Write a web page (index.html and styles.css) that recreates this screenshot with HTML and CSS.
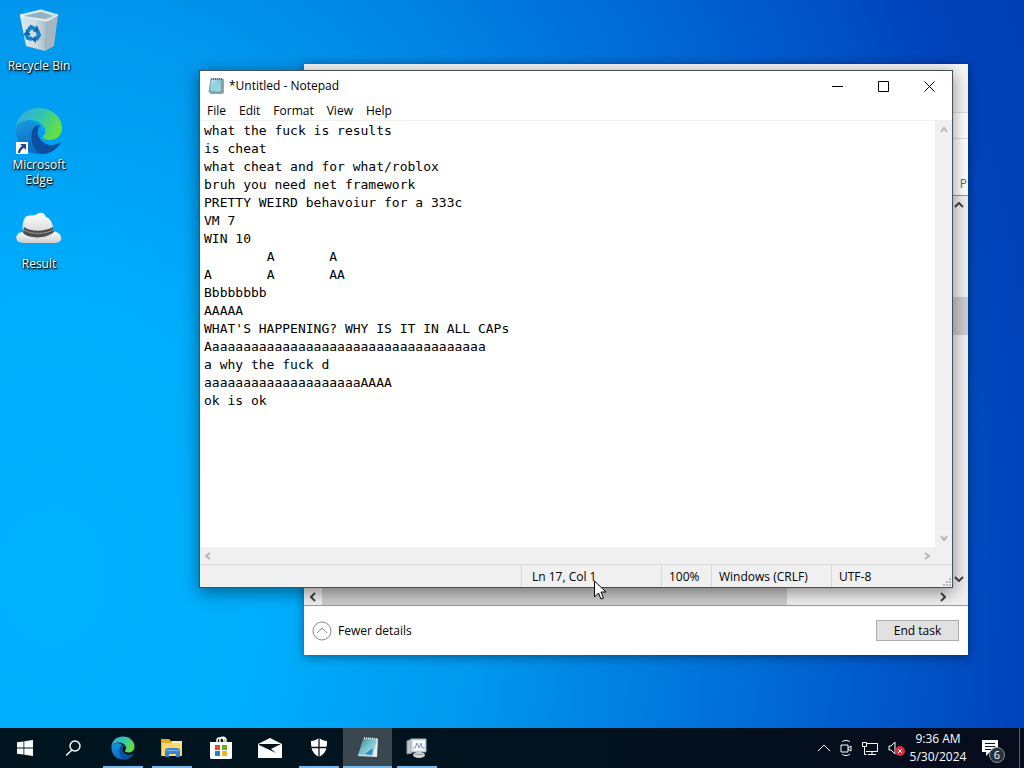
FILE: index.html
```html
<!DOCTYPE html>
<html lang="en">
<head>
    <meta charset="UTF-8">
    <meta name="viewport" content="width=device-width, initial-scale=1.0">
    <title>Desktop</title>
    <link rel="stylesheet" href="styles.css">
</head>
<body>
    <!-- shared shapes -->
    <svg class="defs" width="0" height="0" aria-hidden="true">
        <defs>
            <linearGradient id="edgeTop" x1="0" y1="0" x2="1" y2="0.4">
                <stop offset="0" stop-color="#35a7e4"/>
                <stop offset="0.55" stop-color="#31c4b4"/>
                <stop offset="1" stop-color="#62df45"/>
            </linearGradient>
            <linearGradient id="edgeLeft" x1="0" y1="0" x2="0.5" y2="1">
                <stop offset="0" stop-color="#1b98df"/>
                <stop offset="1" stop-color="#0865bd"/>
            </linearGradient>
            <linearGradient id="paper" x1="0" y1="0" x2="1" y2="1">
                <stop offset="0" stop-color="#dff5f9"/>
                <stop offset="0.5" stop-color="#7cc6d6"/>
                <stop offset="1" stop-color="#b9e2ec"/>
            </linearGradient>
            <linearGradient id="page" x1="0" y1="0" x2="1" y2="1">
                <stop offset="0" stop-color="#2f8190"/>
                <stop offset="0.5" stop-color="#7cc3cf"/>
                <stop offset="1" stop-color="#c4e8f0"/>
            </linearGradient>
            <linearGradient id="binSide" x1="0" y1="0" x2="1" y2="0">
                <stop offset="0" stop-color="#dce7ee"/>
                <stop offset="0.6" stop-color="#cfdae1"/>
                <stop offset="1" stop-color="#a9bac5"/>
            </linearGradient>
            <linearGradient id="felt" x1="0" y1="0" x2="0" y2="1">
                <stop offset="0" stop-color="#ffffff"/>
                <stop offset="1" stop-color="#cfcfcf"/>
            </linearGradient>
            <symbol id="edge" viewBox="0 0 48 48">
                <path fill="url(#edgeLeft)" d="M1 20C0 35 8 47 25 47c9 0 16-4 20-11-7 4-16 3-20-3-4-5-3-10 0-13C18 12 6 12 1 20z"/>
                <path fill="#0d4f9e" d="M17 25c1-5 4-7 8-7-3 4-3 9 0 14 4 6 12 8 19 4 2-1 2 0 1 1-5 7-12 10-18 10-8-3-12-11-10-22z"/>
                <path fill="url(#edgeTop)" d="M1 21C2 9 11 1 24 1c14 0 23 10 23 20 0 7-5 12-12 12-5 0-8-2-7-4 2-2 3-4 2-7-2-5-8-9-15-9-7 0-12 3-14 8z"/>
            </symbol>
        </defs>
    </svg>

    <div class="screen">
        <main class="desktop">
            <nav class="shortcuts" aria-label="Desktop icons">
                <button class="shortcut">
                    <svg width="48" height="48" viewBox="0 0 48 48">
                        <path fill="#c5dfeb" stroke="#edf6fa" d="M5 7l21-5 17 5-10 6z"/>
                        <path fill="#94afbd" d="M9 8l17-4 12 4-8 3z"/>
                        <path fill="url(#binSide)" d="M5 8l27 5-2 30-19-5z"/>
                        <path fill="#a6b7c1" d="M32 13l11-6-4 31-9 5z"/>
                        <path fill="none" stroke="#edf5f8" d="M5 8l27 5 11-6"/>
                        <path fill="none" stroke="#1482ce" stroke-width="4" d="M12 24l4-5 4 2M22 22l2 5-3 5M17 31l-4-1-2-4"/>
                        <path fill="#1267a8" d="M18 24l6-1-2-6zM21 28l-5 3 5 4zM8 27l4-5 4 5z"/>
                    </svg>
                    <span>Recycle Bin</span>
                </button>
                <button class="shortcut">
                    <svg width="48" height="48" viewBox="0 0 48 48">
                        <use href="#edge" width="48" height="48"/>
                        <path fill="#fff" d="M1 35h12v12H1z"/>
                        <path fill="#26478a" d="M5 37h6v6l-2-2c-2 1-3 2-4 5H3c0-3 1-5 4-7z"/>
                    </svg>
                    <span>Microsoft Edge</span>
                </button>
                <button class="shortcut">
                    <svg width="48" height="48" viewBox="0 0 48 48">
                        <path fill="url(#felt)" d="M9 26c-7 0-9 5-7 8 1 3 5 3 10 3h26c6 0 9-2 8-6-1-4-4-5-9-6z"/>
                        <path fill="url(#felt)" d="M8 25c-1-5 0-13 4-15 4-1 7 0 10-2 5-3 8 0 9 3 4 1 7 6 8 15-4 7-25 8-31-1z"/>
                        <path fill="#4d4d4d" d="M9 21c7 5 20 5 29 0l1 5c-8 7-25 7-31 1z"/>
                        <path fill="none" stroke="#999" d="M9 24c8 5 22 4 29 0"/>
                    </svg>
                    <span>Result</span>
                </button>
            </nav>

            <section class="window taskmgr" aria-label="Task Manager">
                <div class="tm-title"></div>
                <div class="tm-tabs"></div>
                <div class="tm-header">P</div>
                <div class="tm-body">
                    <div class="tm-vscroll">
                        <svg width="10" height="6" viewBox="0 0 10 6"><path d="M1 5l4-4 4 4"/></svg>
                        <div class="tm-vthumb"></div>
                        <svg width="10" height="6" viewBox="0 0 10 6"><path d="M1 1l4 4 4-4"/></svg>
                    </div>
                </div>
                <div class="tm-hscroll">
                    <svg width="6" height="10" viewBox="0 0 6 10"><path d="M5 1L1 5l4 4"/></svg>
                    <div class="tm-track"><div class="tm-hthumb"></div></div>
                    <svg width="6" height="10" viewBox="0 0 6 10"><path d="M1 1l4 4-4 4"/></svg>
                </div>
                <footer class="tm-footer">
                    <button class="fewer">
                        <svg width="20" height="20" viewBox="0 0 20 20"><circle cx="10" cy="10" r="9"/><path d="M5 12l5-5 5 5"/></svg>
                        Fewer details
                    </button>
                    <button class="end-task">End task</button>
                </footer>
            </section>

            <section class="window notepad" aria-label="Notepad">
                <header class="titlebar">
                    <svg width="18" height="18" viewBox="0 0 18 18">
                        <path fill="#8fa6ad" d="M3 2h13v14l-2 1H2z"/>
                        <path fill="url(#paper)" stroke="#6f99a6" d="M3 2h11l-1 13H1z"/>
                        <path stroke="#58737c" stroke-dasharray="1 1" stroke-width="2" d="M3 2h12"/>
                        <path stroke="#a4dae5" d="M4 6h8M4 8h8M3 10h8M3 12h8"/>
                    </svg>
                    <h1>*Untitled - Notepad</h1>
                    <div class="caption-buttons">
                        <button aria-label="Minimize"><svg width="11" height="11" viewBox="0 0 11 11"><path d="M0 5.500h11"/></svg></button>
                        <button aria-label="Maximize"><svg width="11" height="11" viewBox="0 0 11 11"><path d="M.5.5h10v10H.5z"/></svg></button>
                        <button aria-label="Close"><svg width="11" height="11" viewBox="0 0 11 11"><path d="M.5.5l10 10M10.500.5l-10 10"/></svg></button>
                    </div>
                </header>
                <div class="menubar">
                    <button>File</button>
                    <button>Edit</button>
                    <button>Format</button>
                    <button>View</button>
                    <button>Help</button>
                </div>
                <div class="editor">
                    <textarea aria-label="Text editor" spellcheck="false" wrap="off">what the fuck is results
is cheat
what cheat and for what/roblox
bruh you need net framework
PRETTY WEIRD behavoiur for a 333c
VM 7
WIN 10
	A	A
A	A	AA
Bbbbbbbb
AAAAA
WHAT'S HAPPENING? WHY IS IT IN ALL CAPs
Aaaaaaaaaaaaaaaaaaaaaaaaaaaaaaaaaaaa
a why the fuck d
aaaaaaaaaaaaaaaaaaaaAAAA
ok is ok</textarea>
                    <div class="vscroll">
                        <svg width="8" height="6" viewBox="0 0 8 6"><path d="M1 5l3-4 3 4"/></svg>
                        <svg width="8" height="6" viewBox="0 0 8 6"><path d="M1 1l3 4 3-4"/></svg>
                    </div>
                </div>
                <div class="hscroll">
                    <svg width="6" height="8" viewBox="0 0 6 8"><path d="M5 1L1 4l4 3"/></svg>
                    <svg width="6" height="8" viewBox="0 0 6 8"><path d="M1 1l4 3-4 3"/></svg>
                </div>
                <footer class="statusbar">
                    <span class="position">Ln 17, Col 1</span>
                    <span class="zoom">100%</span>
                    <span class="ending">Windows (CRLF)</span>
                    <span class="encoding">UTF-8</span>
                    <svg class="grip" width="10" height="10" viewBox="0 0 10 10"><path fill="#b8b8b8" d="M7 1h2v2H7zM7 4h2v2H7zM4 4h2v2H4zM7 7h2v2H7zM4 7h2v2H4zM1 7h2v2H1z"/></svg>
                </footer>
            </section>

            <svg class="cursor" width="13" height="20" viewBox="0 0 13 20">
                <path fill="#fff" stroke="#000" d="M.5 1v16l4-4 2.500 6 2.500-1L7 12h5z"/>
            </svg>
        </main>

        <footer class="taskbar">
            <button class="task" aria-label="Start">
                <svg width="16" height="16" viewBox="0 0 16 16"><path fill="#fff" d="M0 2.300l6.500-.9v6.200H0zM7.300 1.300L16 0v7.600H7.300zM0 8.400h6.500v6.200L0 13.700zM7.300 8.400H16V16l-8.700-1.300z"/></svg>
            </button>
            <button class="task" aria-label="Search">
                <svg width="16" height="16" viewBox="0 0 16 16"><path fill="none" stroke="#fff" stroke-width="1.400" d="M6 10L0 15.500"/><circle cx="9" cy="6" r="5" fill="none" stroke="#fff" stroke-width="1.400"/></svg>
            </button>
            <button class="task open" aria-label="Microsoft Edge">
                <svg width="24" height="24"><use href="#edge" width="24" height="24"/></svg>
            </button>
            <button class="task open" aria-label="File Explorer">
                <svg width="24" height="24" viewBox="0 0 24 24">
                    <path fill="#e9a820" d="M1 3h8l2 2h11v15H1z"/>
                    <path fill="#ffda72" d="M2 7h20v13H2z"/>
                    <path fill="#fff0ad" d="M12 5h10v2H12z"/>
                    <path fill="#3886d3" d="M5 15c0-2 1-3 3-3h9c2 0 3 1 3 3v6h-4v-3H9v3H5z"/>
                    <path fill="#74b8e8" d="M6 14h13v1H6z"/>
                </svg>
            </button>
            <button class="task" aria-label="Microsoft Store">
                <svg width="24" height="24" viewBox="0 0 24 24">
                    <path fill="none" stroke="#fff" stroke-width="1.500" d="M8 7V4c0-3 7-3 7 0v3M11 7V3c1-3 6-2 6 1v3"/>
                    <path fill="#fff" d="M1 6h22v15c0 2-1 2-2 2H3c-1 0-2 0-2-2z"/>
                    <path fill="#e74c27" d="M6 9h5v5H6z"/><path fill="#69ad20" d="M13 9h5v5h-5z"/>
                    <path fill="#128bc8" d="M6 15h5v5H6z"/><path fill="#f4b516" d="M13 15h5v5h-5z"/>
                </svg>
            </button>
            <button class="task" aria-label="Mail">
                <svg width="24" height="20" viewBox="0 0 24 20">
                    <path fill="#fff" d="M0 6l12-6 12 6v14H0z"/>
                    <path fill="#06131b" d="M1 6h22L13 11l5 4L1 7z"/>
                </svg>
            </button>
            <button class="task open" aria-label="Windows Security">
                <svg width="18" height="20" viewBox="0 0 18 20">
                    <path fill="#fff" d="M9 0c3 2 5 3 8 3 0 8-1 12-8 16C2 15 1 11 1 3c3 0 5-1 8-3z"/>
                    <path stroke="#06131b" stroke-width="1.300" d="M9 0v20M0 9.500h18"/>
                </svg>
            </button>
            <button class="task open active" aria-label="Notepad">
                <svg width="24" height="24" viewBox="0 0 24 24">
                    <path fill="#e6edee" d="M8 2l14 1-1 18-19-1z"/>
                    <path fill="url(#page)" d="M8 2l13 1-4 17-15-1z"/>
                    <path fill="#2c89bd" d="M9 18l8-6-1 7z"/>
                    <path stroke="#cfe4e7" stroke-dasharray="1 1" stroke-width="2" d="M8 2l13 1"/>
                </svg>
            </button>
            <button class="task open" aria-label="Task Manager">
                <svg width="24" height="24" viewBox="0 0 24 24">
                    <path fill="#bdc5c9" stroke="#919ba1" d="M2 5l5-2v14l-5 1z"/>
                    <path fill="#e5e9ec" stroke="#a2acb2" d="M6 3h15v13H6z"/>
                    <path fill="#f7faff" d="M8 5h12v9H8z"/>
                    <path fill="none" stroke="#8092bd" d="M8 12h2l2-5 2 5 2-5 1 5h3"/>
                    <ellipse cx="14" cy="19" rx="6" ry="3" fill="#d2d6d8"/>
                    <path fill="#939da3" d="M10 18h8v1h-8z"/>
                </svg>
            </button>

            <div class="tray">
                <button aria-label="Show hidden icons"><svg width="14" height="16" viewBox="0 0 14 16"><path d="M1 11l6-6 6 6"/></svg></button>
                <button aria-label="Meet now"><svg width="14" height="16" viewBox="0 0 14 16"><path d="M2 5h7v7H2zM9 8l3-2v5L9 9M3 2c2-2 6-2 8 0M3 14c2 2 6 2 8 0"/></svg></button>
                <button aria-label="Network"><svg width="18" height="16" viewBox="0 0 18 16"><path d="M6 3.500h10.500v8H5M11 11v3M7 14.500h8M1.500 2.500h4v4h-4zM3.500 6v8.500h2"/></svg></button>
                <button aria-label="Volume muted"><svg width="18" height="16" viewBox="0 0 18 16"><path d="M2 6h2l4-4v12l-4-4H2z"/><circle class="muted" cx="13" cy="11" r="5"/><path d="M11 9l4 4M15 9l-4 4"/></svg></button>
            </div>
            <button class="clock"><time datetime="2024-05-30T09:36">9:36 AM<br>5/30/2024</time></button>
            <button class="notifications" aria-label="6 notifications">
                <svg width="18" height="18" viewBox="0 0 18 18"><path fill="#fff" d="M1 1h16v12H9l-4 4v-4H1z"/><path stroke="#07111c" d="M4 4.500h10M4 7.500h10M4 10.500h6"/></svg>
                <span class="badge">6</span>
            </button>
            <button class="show-desktop" aria-label="Show desktop"></button>
        </footer>
    </div>
</body>
</html>
```

FILE: styles.css
```css
* {
    box-sizing: border-box;
}
body {
    margin: 0;
    font-family: "Open Sans", "Noto Sans", sans-serif;
    font-size: 12px;
    line-height: 16px;
    color: #000;
}
button {
    margin: 0;
    padding: 0;
    border: 0;
    background: none;
    color: inherit;
    font: inherit;
}
svg {
    display: block;
    flex: none;
}
.defs {
    position: absolute;
}
.screen {
    display: flex;
    flex-direction: column;
    height: 100vh;
    overflow: hidden;
    background: radial-gradient(ellipse 110% 190% at 5% 75%, #00b2ff 0%, #00adfc 20%, #0098ee 38%, #0078dd 56%, #005ccd 72%, #0042b9 87%, #003bb2 100%);
}
.desktop {
    position: relative;
    flex: 1;
    min-height: 0;
}

/* desktop icons */
.shortcuts {
    display: flex;
    flex-direction: column;
    width: 78px;
    padding-top: 8px;
}
.shortcut {
    display: flex;
    flex-direction: column;
    align-items: center;
    justify-content: flex-start;
    gap: 2px;
    height: 99px;
    color: #fff;
    line-height: 15px;
    text-shadow: 1px 1px 1px #000, 0 1px 3px #000;
}

/* windows */
.window {
    position: absolute;
    display: flex;
    flex-direction: column;
    background: #fff;
}
.taskmgr {
    top: 64px;
    right: 56px;
    bottom: 73px;
    left: 304px;
    box-shadow: 0 2px 10px rgba(0, 0, 0, 0.4);
}
.taskmgr path,
.taskmgr circle {
    fill: none;
    stroke: #444;
    stroke-width: 2;
}
.tm-title {
    height: 49px;
    border-bottom: 1px solid #ddd;
    background: #f5f5f5;
}
.tm-tabs {
    height: 26px;
    border-bottom: 1px solid #ddd;
}
.tm-header {
    height: 57px;
    padding: 37px 1px 0 0;
    border-bottom: 1px solid #999;
    color: #666;
    text-align: right;
}
.tm-body {
    display: flex;
    flex: 1;
    justify-content: flex-end;
    min-height: 0;
}
.tm-vscroll {
    display: flex;
    flex-direction: column;
    align-items: center;
    justify-content: space-between;
    width: 18px;
    padding: 6px 0;
    background: #f0f0f0;
}
.tm-vthumb {
    width: 100%;
    height: 38px;
    margin-bottom: 152px;
    background: #cdcdcd;
}
.tm-hscroll {
    display: flex;
    align-items: center;
    gap: 6px;
    height: 18px;
    padding: 0 22px 0 6px;
    border-bottom: 1px solid #999;
    background: #f0f0f0;
}
.tm-track {
    flex: 1;
    height: 100%;
}
.tm-hthumb {
    width: 76%;
    height: 100%;
    background: #cdcdcd;
}
.tm-footer {
    display: flex;
    align-items: center;
    justify-content: space-between;
    height: 49px;
    padding: 0 9px 0 8px;
}
.fewer {
    display: flex;
    align-items: center;
    gap: 6px;
}
.fewer path,
.fewer circle {
    stroke: #888;
    stroke-width: 1;
}
.end-task {
    width: 83px;
    height: 21px;
    border: 1px solid #adadad;
    background: #e1e1e1;
    line-height: 18px;
}

/* notepad */
.notepad {
    top: 70px;
    right: 71px;
    bottom: 140px;
    left: 199px;
    border: 1px solid #45525a;
    box-shadow: 0 4px 16px rgba(0, 0, 0, 0.45);
}
.titlebar {
    display: flex;
    align-items: center;
    gap: 3px;
    height: 30px;
    padding-left: 8px;
}
.titlebar h1 {
    flex: 1;
    margin: 0;
    font-size: 12px;
    font-weight: 400;
}
.caption-buttons {
    display: flex;
}
.caption-buttons button {
    display: flex;
    align-items: center;
    justify-content: center;
    width: 46px;
    height: 28px;
}
.caption-buttons path {
    fill: none;
    stroke: #000;
}
.menubar {
    display: flex;
    height: 20px;
    border-bottom: 1px solid #f0f0f0;
}
.menubar button {
    padding: 0 6px 0 7px;
}
.editor {
    display: flex;
    flex: 1;
    min-height: 0;
}
.editor textarea {
    flex: 1;
    min-width: 0;
    padding: 1px 4px;
    border: 0;
    outline: 0;
    resize: none;
    overflow: hidden;
    background: #fff;
    color: #000;
    font-family: "DejaVu Sans Mono", monospace;
    font-size: 13px;
    line-height: 18px;
    tab-size: 8;
}
.vscroll,
.hscroll {
    display: flex;
    align-items: center;
    justify-content: space-between;
    background: #f0f0f0;
}
.vscroll {
    flex-direction: column;
    width: 17px;
    padding: 6px 0;
}
.hscroll {
    height: 17px;
    padding: 0 22px 0 5px;
}
.vscroll path,
.hscroll path {
    fill: none;
    stroke: #b5b5b5;
    stroke-width: 2;
}
.statusbar {
    display: flex;
    height: 23px;
    padding-left: 321px;
    border-top: 1px solid #dadada;
    background: #f0f0f0;
    line-height: 24px;
}
.statusbar span {
    height: 22px;
    padding-left: 7px;
    border-left: 1px solid #d7d7d7;
    white-space: nowrap;
}
.statusbar .position {
    flex: 1;
    padding-left: 10px;
}
.zoom {
    width: 50px;
}
.ending {
    width: 120px;
}
.encoding {
    width: 111px;
}
.grip {
    align-self: flex-end;
}
.cursor {
    position: absolute;
    top: 580px;
    left: 594px;
}

/* taskbar */
.taskbar {
    display: flex;
    height: 40px;
    background: linear-gradient(90deg, #00151f, #02131f 50%, #060c1c);
    color: #fff;
}
.task {
    display: flex;
    align-items: center;
    justify-content: center;
    width: 49px;
}
.open {
    background: linear-gradient(#76b9ed, #76b9ed) center bottom / 40px 2px no-repeat;
}
.active {
    background: linear-gradient(#76b9ed, #76b9ed) center bottom / 49px 2px no-repeat, #3a474f;
}
.tray {
    display: flex;
    flex: 1;
    align-items: center;
    justify-content: flex-end;
    gap: 8px;
}
.tray path {
    fill: none;
    stroke: #fff;
}
.muted {
    fill: #d92d3a;
}
.clock {
    width: 66px;
    line-height: 18px;
    text-align: center;
}
.notifications {
    position: relative;
    display: flex;
    align-items: center;
    justify-content: flex-start;
    width: 48px;
    padding-left: 10px;
}
.badge {
    position: absolute;
    left: 18px;
    bottom: 5px;
    width: 16px;
    height: 16px;
    border: 1px solid #8b9299;
    border-radius: 50%;
    background: #29323b;
    font-size: 11px;
    line-height: 14px;
    text-align: center;
}
.show-desktop {
    width: 5px;
    border-left: 1px solid #59616a;
}
```
